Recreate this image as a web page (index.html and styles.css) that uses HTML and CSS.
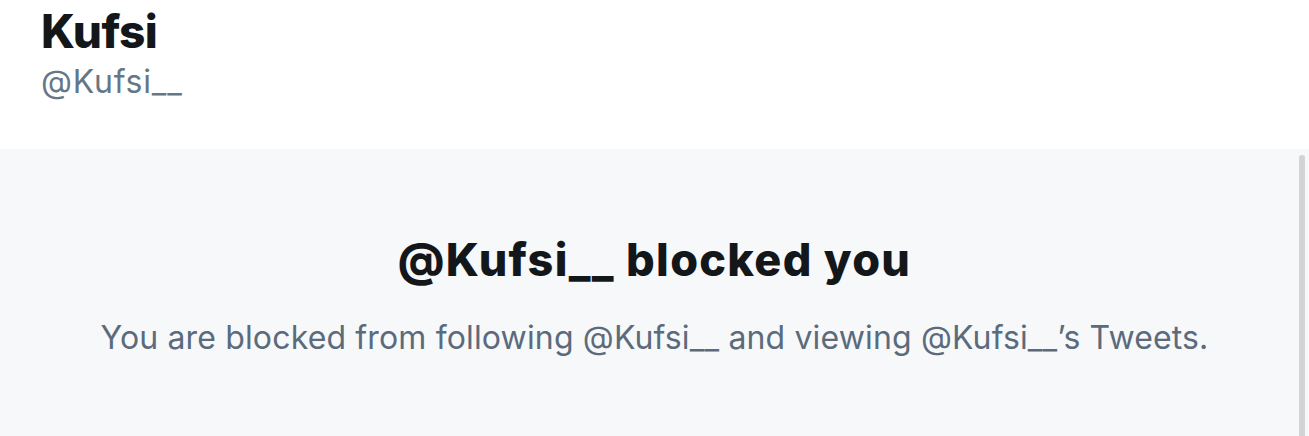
FILE: index.html
```html
<!DOCTYPE html>
<html>
<head>
<meta charset="utf-8">
<link rel="stylesheet" href="styles.css">
</head>
<body>
<header class="profile-head">
  <h1 class="name">Kufsi</h1>
  <div class="handle">@Kufsi__</div>
</header>
<main class="blocked">
  <div class="scrollbar"></div>
  <h2 class="blocked-title">@Kufsi__ blocked you</h2>
  <p class="blocked-text">You are blocked from following @Kufsi__ and viewing @Kufsi__’s Tweets.</p>
</main>
</body>
</html>
```
FILE: styles.css
```css
html, body {
  margin: 0;
  padding: 0;
  width: 1309px;
  height: 436px;
  overflow: hidden;
  font-family: Inter, "Noto Sans", sans-serif;
}
.profile-head {
  background: #ffffff;
  height: 149px;
  box-sizing: border-box;
  padding: 6px 0 0 41px;
}
.name {
  margin: 0;
  font-size: 46px;
  font-weight: 800;
  line-height: 50px;
  color: #14171a;
  letter-spacing: -0.6px;
}
.handle {
  margin-top: 8px;
  font-size: 32px;
  line-height: 36px;
  color: #657786;
  letter-spacing: 0.8px;
}
.blocked {
  position: relative;
  background: #f7f8fa;
  height: 287px;
  display: flex;
  flex-direction: column;
  align-items: center;
  padding-top: 86px;
  box-sizing: border-box;
}
.scrollbar {
  position: absolute;
  right: 4px;
  top: 6px;
  bottom: 0;
  width: 6px;
  border-radius: 3px 3px 0 0;
  background: #d3d3d5;
}
.blocked-title {
  margin: 0;
  font-size: 45px;
  font-weight: 800;
  line-height: 50px;
  color: #14171a;
  letter-spacing: 1.3px;
}
.blocked-text {
  margin: 33px 0 0 0;
  font-size: 32px;
  line-height: 40px;
  color: #5b6b7c;
  letter-spacing: 0.15px;
}
```
